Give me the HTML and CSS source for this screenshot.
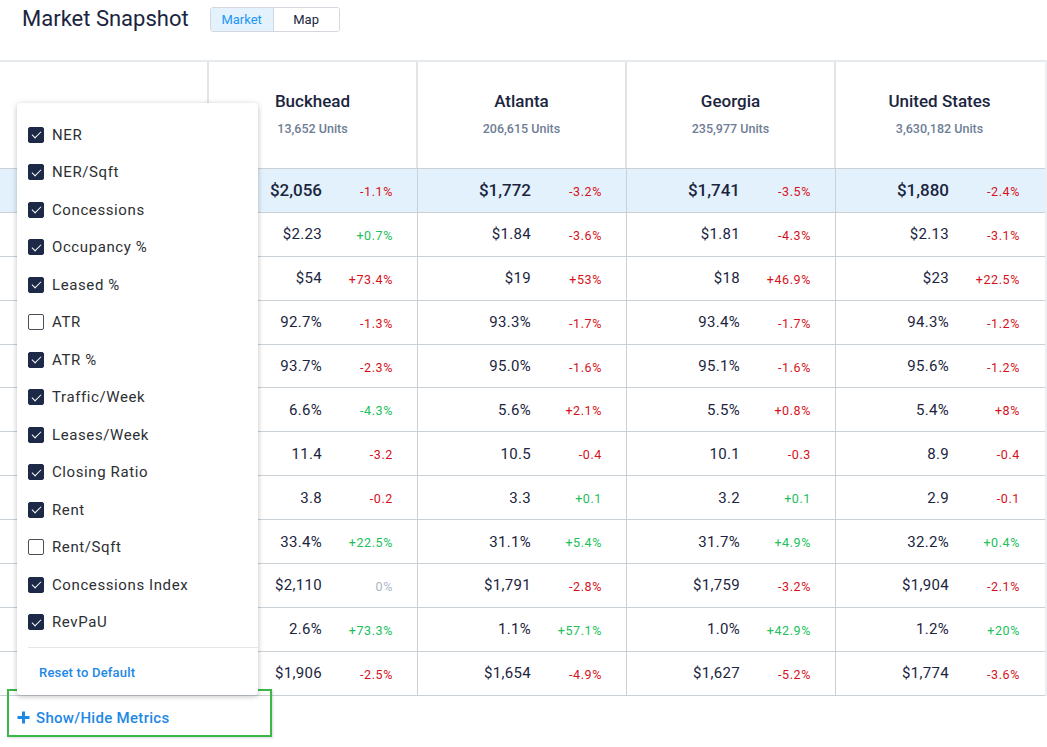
FILE: index.html
```html
<!DOCTYPE html>
<html lang="en">
<head>
<meta charset="utf-8">
<title>Market Snapshot</title>
<link rel="stylesheet" href="styles.css">
</head>
<body>
<header class="topbar">
  <h1 class="title">Market Snapshot</h1>
  <div class="toggle">
    <button class="toggle-btn active">Market</button>
    <button class="toggle-btn">Map</button>
  </div>
</header>

<section class="snapshot">
  <div class="grid">
    <div class="row head">
      <div class="cell label"></div>
      <div class="cell col-head"><div class="city">Buckhead</div><div class="units">13,652 Units</div></div>
      <div class="cell col-head"><div class="city">Atlanta</div><div class="units">206,615 Units</div></div>
      <div class="cell col-head"><div class="city">Georgia</div><div class="units">235,977 Units</div></div>
      <div class="cell col-head"><div class="city">United States</div><div class="units">3,630,182 Units</div></div>
    </div>

    <div class="row primary">
      <div class="cell label"></div>
      <div class="cell"><span class="val">$2,056</span><span class="chg neg">-1.1%</span></div>
      <div class="cell"><span class="val">$1,772</span><span class="chg neg">-3.2%</span></div>
      <div class="cell"><span class="val">$1,741</span><span class="chg neg">-3.5%</span></div>
      <div class="cell"><span class="val">$1,880</span><span class="chg neg">-2.4%</span></div>
    </div>
    <div class="row">
      <div class="cell label"></div>
      <div class="cell"><span class="val">$2.23</span><span class="chg pos">+0.7%</span></div>
      <div class="cell"><span class="val">$1.84</span><span class="chg neg">-3.6%</span></div>
      <div class="cell"><span class="val">$1.81</span><span class="chg neg">-4.3%</span></div>
      <div class="cell"><span class="val">$2.13</span><span class="chg neg">-3.1%</span></div>
    </div>
    <div class="row">
      <div class="cell label"></div>
      <div class="cell"><span class="val">$54</span><span class="chg neg">+73.4%</span></div>
      <div class="cell"><span class="val">$19</span><span class="chg neg">+53%</span></div>
      <div class="cell"><span class="val">$18</span><span class="chg neg">+46.9%</span></div>
      <div class="cell"><span class="val">$23</span><span class="chg neg">+22.5%</span></div>
    </div>
    <div class="row">
      <div class="cell label"></div>
      <div class="cell"><span class="val">92.7%</span><span class="chg neg">-1.3%</span></div>
      <div class="cell"><span class="val">93.3%</span><span class="chg neg">-1.7%</span></div>
      <div class="cell"><span class="val">93.4%</span><span class="chg neg">-1.7%</span></div>
      <div class="cell"><span class="val">94.3%</span><span class="chg neg">-1.2%</span></div>
    </div>
    <div class="row">
      <div class="cell label"></div>
      <div class="cell"><span class="val">93.7%</span><span class="chg neg">-2.3%</span></div>
      <div class="cell"><span class="val">95.0%</span><span class="chg neg">-1.6%</span></div>
      <div class="cell"><span class="val">95.1%</span><span class="chg neg">-1.6%</span></div>
      <div class="cell"><span class="val">95.6%</span><span class="chg neg">-1.2%</span></div>
    </div>
    <div class="row">
      <div class="cell label"></div>
      <div class="cell"><span class="val">6.6%</span><span class="chg pos">-4.3%</span></div>
      <div class="cell"><span class="val">5.6%</span><span class="chg neg">+2.1%</span></div>
      <div class="cell"><span class="val">5.5%</span><span class="chg neg">+0.8%</span></div>
      <div class="cell"><span class="val">5.4%</span><span class="chg neg">+8%</span></div>
    </div>
    <div class="row">
      <div class="cell label"></div>
      <div class="cell"><span class="val">11.4</span><span class="chg neg">-3.2</span></div>
      <div class="cell"><span class="val">10.5</span><span class="chg neg">-0.4</span></div>
      <div class="cell"><span class="val">10.1</span><span class="chg neg">-0.3</span></div>
      <div class="cell"><span class="val">8.9</span><span class="chg neg">-0.4</span></div>
    </div>
    <div class="row">
      <div class="cell label"></div>
      <div class="cell"><span class="val">3.8</span><span class="chg neg">-0.2</span></div>
      <div class="cell"><span class="val">3.3</span><span class="chg pos">+0.1</span></div>
      <div class="cell"><span class="val">3.2</span><span class="chg pos">+0.1</span></div>
      <div class="cell"><span class="val">2.9</span><span class="chg neg">-0.1</span></div>
    </div>
    <div class="row">
      <div class="cell label"></div>
      <div class="cell"><span class="val">33.4%</span><span class="chg pos">+22.5%</span></div>
      <div class="cell"><span class="val">31.1%</span><span class="chg pos">+5.4%</span></div>
      <div class="cell"><span class="val">31.7%</span><span class="chg pos">+4.9%</span></div>
      <div class="cell"><span class="val">32.2%</span><span class="chg pos">+0.4%</span></div>
    </div>
    <div class="row">
      <div class="cell label"></div>
      <div class="cell"><span class="val">$2,110</span><span class="chg zero">0%</span></div>
      <div class="cell"><span class="val">$1,791</span><span class="chg neg">-2.8%</span></div>
      <div class="cell"><span class="val">$1,759</span><span class="chg neg">-3.2%</span></div>
      <div class="cell"><span class="val">$1,904</span><span class="chg neg">-2.1%</span></div>
    </div>
    <div class="row">
      <div class="cell label"></div>
      <div class="cell"><span class="val">2.6%</span><span class="chg pos">+73.3%</span></div>
      <div class="cell"><span class="val">1.1%</span><span class="chg pos">+57.1%</span></div>
      <div class="cell"><span class="val">1.0%</span><span class="chg pos">+42.9%</span></div>
      <div class="cell"><span class="val">1.2%</span><span class="chg pos">+20%</span></div>
    </div>
    <div class="row">
      <div class="cell label"></div>
      <div class="cell"><span class="val">$1,906</span><span class="chg neg">-2.5%</span></div>
      <div class="cell"><span class="val">$1,654</span><span class="chg neg">-4.9%</span></div>
      <div class="cell"><span class="val">$1,627</span><span class="chg neg">-5.2%</span></div>
      <div class="cell"><span class="val">$1,774</span><span class="chg neg">-3.6%</span></div>
    </div>
  </div>

  <div class="metrics-menu">
    <ul class="metric-list">
      <li class="metric"><span class="box checked"></span>NER</li>
      <li class="metric"><span class="box checked"></span>NER/Sqft</li>
      <li class="metric"><span class="box checked"></span>Concessions</li>
      <li class="metric"><span class="box checked"></span>Occupancy %</li>
      <li class="metric"><span class="box checked"></span>Leased %</li>
      <li class="metric"><span class="box"></span>ATR</li>
      <li class="metric"><span class="box checked"></span>ATR %</li>
      <li class="metric"><span class="box checked"></span>Traffic/Week</li>
      <li class="metric"><span class="box checked"></span>Leases/Week</li>
      <li class="metric"><span class="box checked"></span>Closing Ratio</li>
      <li class="metric"><span class="box checked"></span>Rent</li>
      <li class="metric"><span class="box"></span>Rent/Sqft</li>
      <li class="metric"><span class="box checked"></span>Concessions Index</li>
      <li class="metric"><span class="box checked"></span>RevPaU</li>
    </ul>
    <div class="menu-divider"></div>
    <div class="reset">Reset to Default</div>
  </div>

  <div class="toggle-metrics">
    <svg class="plus" width="13" height="13" viewBox="0 0 13 13" aria-hidden="true"><path d="M6.5 0.5v12M0.5 6.5h12" stroke="#1e88e5" stroke-width="3" fill="none"/></svg>
    <span>Show/Hide Metrics</span>
  </div>
</section>
</body>
</html>
```

FILE: styles.css
```css
* { box-sizing: border-box; }

body {
  margin: 0;
  font-family: Roboto, "Noto Sans", Arial, sans-serif;
  color: #1b2540;
  background: #fff;
  width: 1047px;
  height: 747px;
  overflow: hidden;
}

.topbar {
  display: flex;
  align-items: center;
  height: 40px;
  padding: 0 0 0 22px;
}

.title {
  margin: 0;
  font-size: 22px;
  font-weight: 400;
  color: #1b2540;
  line-height: 1;
  position: relative;
  top: -1px;
}

.toggle {
  display: flex;
  margin-left: 21px;
  border: 1px solid #d3d8de;
  border-radius: 3px;
  overflow: hidden;
  position: relative;
  top: -1px;
}

.toggle-btn {
  font-family: inherit;
  font-size: 13px;
  height: 23px;
  border: none;
  background: #fff;
  color: #1b2540;
  padding: 0;
  width: 65px;
  cursor: pointer;
}

.toggle-btn.active {
  background: #e3f2fd;
  color: #2196f3;
  width: 63px;
  border-right: 1px solid #d3d8de;
}

.snapshot {
  position: relative;
  margin-top: 20px;
}

.grid {
  width: 1047px;
  border-top: 2px solid #e6e9ed;
  border-right: 2px solid #eceff2;
}

.row {
  display: flex;
  height: 43.9px;
  border-bottom: 1px solid #c9d1d7;
}

.row.head {
  height: 107px;
}

.row.primary {
  background: #e3f1fc;
}

.cell {
  width: 209px;
  display: flex;
  align-items: center;
  justify-content: flex-end;
  padding-right: 24px;
  border-left: 1px solid #c9d1d7;
}

.cell.label {
  width: 208px;
  border-left: none;
}

.row.head .cell {
  border-left: 2px solid #e1e5ea;
}

.row.head .cell.label {
  border-left: none;
  width: 207px;
}

.col-head {
  flex-direction: column;
  justify-content: flex-start;
  align-items: center;
  padding: 29px 0 0 0;
}

.city {
  font-size: 17px;
  font-weight: 500;
  color: #1b2540;
  line-height: 20px;
}

.units {
  margin-top: 10px;
  font-size: 12.5px;
  font-weight: 500;
  color: #6e7d95;
  line-height: 16px;
}

.val {
  font-size: 15px;
  color: #1b2540;
  letter-spacing: 0.3px;
}

.row.primary .val {
  font-size: 17px;
  font-weight: 500;
  letter-spacing: 0;
}

.chg {
  width: 71px;
  text-align: right;
  font-size: 12.5px;
  letter-spacing: 0.6px;
  padding-top: 2px;
}

.chg.neg { color: #d6111b; }
.chg.pos { color: #20bf5a; }
.chg.zero { color: #a9b8c8; }

.metrics-menu {
  position: absolute;
  left: 17px;
  top: 43px;
  width: 241px;
  height: 592px;
  background: #fff;
  border-radius: 4px;
  box-shadow: 0 1px 6px rgba(0, 0, 0, 0.18), 0 2px 4px rgba(0, 0, 0, 0.08);
  z-index: 2;
}

.metric-list {
  list-style: none;
  margin: 0;
  padding: 13px 0 0 11px;
}

.metric {
  display: flex;
  align-items: center;
  height: 37.5px;
  font-size: 15px;
  letter-spacing: 0.6px;
  color: #2d2f33;
}

.box {
  width: 16px;
  height: 16px;
  border-radius: 2px;
  border: 1.5px solid #4a4f57;
  margin-right: 8px;
  flex: none;
  position: relative;
  background: #fff;
}

.box.checked {
  background: #1c2a48;
  border-color: #1c2a48;
}

.box.checked::after {
  content: "";
  position: absolute;
  left: 4.5px;
  top: 1.5px;
  width: 4px;
  height: 8px;
  border: solid #fff;
  border-width: 0 1.6px 1.6px 0;
  transform: rotate(45deg);
}

.menu-divider {
  margin: 6px 0 0 11px;
  height: 1px;
  background: #e3e6ea;
}

.reset {
  padding: 17px 0 0 22px;
  font-size: 13px;
  font-weight: 500;
  color: #1e88e5;
  letter-spacing: 0.2px;
}

.toggle-metrics {
  position: relative;
  z-index: 1;
  display: flex;
  align-items: center;
  gap: 6px;
  width: 265px;
  height: 48px;
  margin: -7px 0 0 7px;
  padding: 10px 0 0 8px;
  border: 2px solid #3cb84a;
  box-shadow: 1px 1px 2px rgba(0, 0, 0, 0.15);
  color: #1e88e5;
  font-size: 15px;
  font-weight: 500;
  letter-spacing: 0.3px;
}

.plus {
  flex: none;
}
```
